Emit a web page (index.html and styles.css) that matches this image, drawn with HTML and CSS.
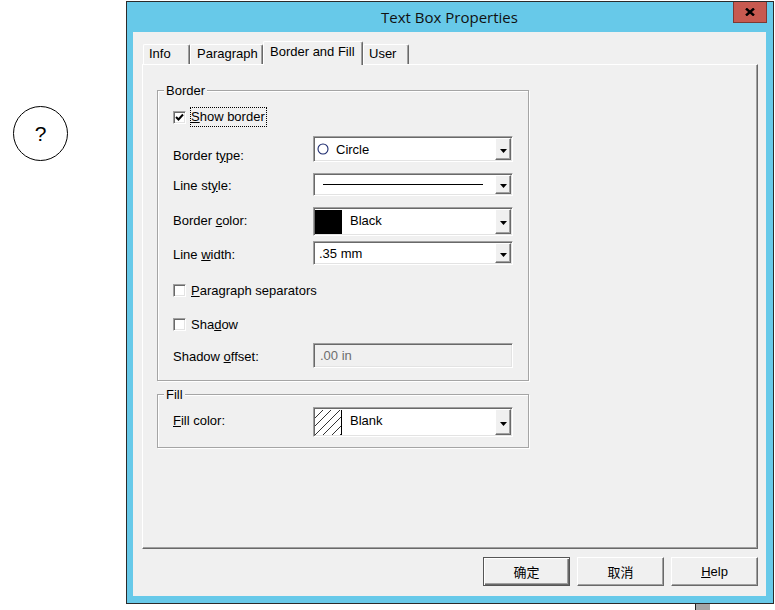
FILE: index.html
```html
<!DOCTYPE html>
<html lang="en">

<head>
	<meta charset="UTF-8">
	<meta name="viewport" content="width=device-width, initial-scale=1.0">
	<title>Text Box Properties</title>
	<link rel="stylesheet" href="styles.css">
</head>

<body>
	<div class="desktop">
		<!-- forme sur la page, derrière la boîte de dialogue -->
		<div class="shape-circle">?</div>
		<div class="behind-bar"></div>

		<div class="dialog">
			<div class="titlebar">
				<span class="title">Text Box Properties</span>
				<div class="close-btn">
					<svg width="10" height="8" viewBox="0 0 10 8"><path d="M1 0.5 L9 7.5 M9 0.5 L1 7.5" stroke="#000" stroke-width="2.4" /></svg>
				</div>
			</div>

			<div class="client">
				<div class="tabs">
					<div class="tab tab-info">Info</div>
					<div class="tab tab-para">Paragraph</div>
					<div class="tab tab-fill active">Border and Fill</div>
					<div class="tab tab-user">User</div>
				</div>

				<div class="pane">
					<div class="group group-border">
						<span class="group-title">Border</span>

						<div class="row row-show">
							<span class="checkbox">
								<svg width="9" height="9" viewBox="0 0 9 9"><path d="M1 4 L3.5 6.5 L8 1.5" fill="none" stroke="#000" stroke-width="2" /></svg>
							</span>
							<span class="check-label focus"><u>S</u>how border</span>
						</div>

						<div class="row row-type">
							<span class="label label-low">Border t<u>y</u>pe:</span>
							<div class="combo">
								<div class="combo-value">
									<svg class="circle-icon" width="12" height="12" viewBox="0 0 12 12"><circle cx="6" cy="6" r="5" fill="none" stroke="#1c2a6e" stroke-width="1.1" /></svg>
									<span>Circle</span>
								</div>
								<div class="combo-btn"><svg width="7" height="4" viewBox="0 0 7 4"><path d="M0 0 H7 L3.5 4 Z" /></svg></div>
							</div>
						</div>

						<div class="row row-style">
							<span class="label">Line st<u>y</u>le:</span>
							<div class="combo">
								<div class="combo-value">
									<div class="line-sample"></div>
								</div>
								<div class="combo-btn"><svg width="7" height="4" viewBox="0 0 7 4"><path d="M0 0 H7 L3.5 4 Z" /></svg></div>
							</div>
						</div>

						<div class="row row-color">
							<span class="label label-mid">Border <u>c</u>olor:</span>
							<div class="combo">
								<div class="combo-value swatch-value">
									<div class="swatch swatch-black"></div>
									<span class="swatch-text">Black</span>
								</div>
								<div class="combo-btn"><svg width="7" height="4" viewBox="0 0 7 4"><path d="M0 0 H7 L3.5 4 Z" /></svg></div>
							</div>
						</div>

						<div class="row row-width">
							<span class="label">Line <u>w</u>idth:</span>
							<div class="combo">
								<div class="combo-value text-value">.35 mm</div>
								<div class="combo-btn"><svg width="7" height="4" viewBox="0 0 7 4"><path d="M0 0 H7 L3.5 4 Z" /></svg></div>
							</div>
						</div>

						<div class="row row-sep">
							<span class="checkbox"></span>
							<span class="check-label"><u>P</u>aragraph separators</span>
						</div>

						<div class="row row-shadow">
							<span class="checkbox"></span>
							<span class="check-label">Sha<u>d</u>ow</span>
						</div>

						<div class="row row-offset">
							<span class="label">Shadow <u>o</u>ffset:</span>
							<div class="field-disabled">.00 in</div>
						</div>
					</div>

					<div class="group group-fill">
						<span class="group-title">Fill</span>

						<div class="row row-fill">
							<span class="label label-mid"><u>F</u>ill color:</span>
							<div class="combo">
								<div class="combo-value swatch-value">
									<div class="swatch swatch-hatch"></div>
									<span class="swatch-text">Blank</span>
								</div>
								<div class="combo-btn"><svg width="7" height="4" viewBox="0 0 7 4"><path d="M0 0 H7 L3.5 4 Z" /></svg></div>
							</div>
						</div>
					</div>
				</div>

				<div class="buttons">
					<div class="btn default">确定</div>
					<div class="btn">取消</div>
					<div class="btn"><u>H</u>elp</div>
				</div>
			</div>
		</div>
	</div>
</body>

</html>
```

FILE: styles.css
```css
* {
	box-sizing: border-box;
}

body {
	margin: 0;
	background: #fff;
	font-family: "Liberation Sans", "Noto Sans CJK SC", sans-serif;
	font-size: 13px;
	color: #000;
}

.desktop {
	position: relative;
	width: 775px;
	height: 610px;
	overflow: hidden;
}

.shape-circle {
	position: absolute;
	left: 13px;
	top: 106px;
	width: 55px;
	height: 55px;
	border: 1px solid #000;
	border-radius: 50%;
	display: flex;
	align-items: center;
	justify-content: center;
	font-size: 21px;
}

.behind-bar {
	position: absolute;
	left: 695px;
	top: 604px;
	width: 15px;
	height: 6px;
	background: #a6a6a6;
	border-left: 1px solid #222;
}

/* fenêtre */
.dialog {
	position: absolute;
	left: 126px;
	top: 1px;
	width: 648px;
	height: 603px;
	border: 1px solid #2b2b2b;
	background: #67c9e9;
	padding: 0 7px 7px 6px;
	display: flex;
	flex-direction: column;
}

.titlebar {
	position: relative;
	height: 30px;
	line-height: 30px;
	text-align: center;
	font-family: "Open Sans", "Liberation Sans", sans-serif;
	font-size: 15px;
	color: #111;
}

.close-btn {
	position: absolute;
	left: 600px;
	top: 0;
	width: 34px;
	height: 21px;
	background: #c75a50;
	border: 1px solid #7e3a33;
	border-top: none;
	display: flex;
	align-items: center;
	justify-content: center;
}

.client {
	flex: 1;
	background: #f0f0f0;
	padding: 9px 8px 10px 9px;
	display: flex;
	flex-direction: column;
}

/* onglets */
.tabs {
	height: 23px;
	display: flex;
	align-items: flex-end;
	padding-left: 1px;
}

.tab {
	height: 20px;
	line-height: 18px;
	padding-left: 5px;
	border: 1px solid;
	border-color: #fff #696969 transparent #fff;
	border-bottom: none;
	border-radius: 2px 2px 0 0;
	box-shadow: inset -1px 0 #a0a0a0;
	white-space: nowrap;
}

.tab.active {
	position: relative;
	z-index: 1;
	height: 24px;
	line-height: 20px;
	margin-bottom: -1px;
	padding-left: 6px;
	background: #f0f0f0;
}

.tab-info {
	width: 47px;
}

.tab-para {
	width: 73px;
	padding-left: 6px;
}

.tab-fill {
	width: 100px;
}

.tab-user {
	width: 46px;
}

.pane {
	flex: 1;
	border: 1px solid;
	border-color: #fff #696969 #696969 #fff;
	box-shadow: inset -1px -1px #a0a0a0;
}

/* cadres Border / Fill */
.group {
	width: 372px;
	margin-left: 14px;
	border: 1px solid #a5a5a5;
	box-shadow: 1px 1px 0 #fff, inset 1px 1px 0 #fff;
}

.group-border {
	margin-top: 25px;
	padding-bottom: 12px;
}

.group-fill {
	margin-top: 13px;
	padding-bottom: 10px;
}

.group-title {
	display: block;
	width: fit-content;
	height: 15px;
	line-height: 15px;
	margin: -8px 0 0 6px;
	padding: 0 2px;
	background: #f0f0f0;
}

.row {
	display: flex;
	align-items: center;
	padding-left: 15px;
}

.row-show {
	margin-top: 9px;
	height: 20px;
}

.row-type {
	margin-top: 9px;
	height: 26px;
}

.row-style {
	margin-top: 11px;
	height: 23px;
}

.row-color {
	margin-top: 11px;
	height: 29px;
}

.row-width {
	margin-top: 5px;
	height: 24px;
}

.row-sep {
	margin-top: 15px;
	height: 20px;
}

.row-shadow {
	margin-top: 14px;
	height: 20px;
}

.row-offset {
	margin-top: 9px;
	height: 25px;
}

.row-fill {
	margin-top: 5px;
	height: 30px;
}

.label {
	width: 140px;
	padding-top: 2px;
}

.label-low {
	align-self: flex-end;
	padding-top: 0;
	margin-bottom: -1px;
}

.label-mid {
	padding-top: 0;
	margin-top: -3px;
}

/* cases à cocher */
.checkbox {
	width: 13px;
	height: 13px;
	background: #fff;
	border: 1px solid;
	border-color: #a0a0a0 #fff #fff #a0a0a0;
	box-shadow: inset 1px 1px #696969, inset -1px -1px #e3e3e3;
	display: flex;
	align-items: center;
	justify-content: center;
}

.check-label {
	margin-left: 5px;
}

.check-label.focus {
	margin-left: 4px;
	height: 20px;
	line-height: 18px;
	border: 1px dotted #000;
	padding-right: 1px;
}

/* listes déroulantes */
.combo {
	width: 200px;
	height: 100%;
	display: flex;
	background: #fff;
	border: 1px solid;
	border-color: #a0a0a0 #fff #fff #a0a0a0;
	box-shadow: inset 1px 1px #696969, inset -1px -1px #e3e3e3;
	padding: 1px;
}

.combo-value {
	flex: 1;
	display: flex;
	align-items: center;
	padding-left: 2px;
}

.circle-icon {
	margin-right: 7px;
}

.line-sample {
	margin-left: 6px;
	width: 160px;
	height: 1px;
	background: #000;
}

.text-value {
	padding-left: 4px;
}

.swatch-value {
	padding-left: 0;
	align-items: stretch;
}

.swatch {
	width: 27px;
	margin-top: 1px;
}

.swatch-black {
	background: #000;
}

.swatch-hatch {
	border-right: 1px solid #000;
	background: repeating-linear-gradient(135deg, #fff 0 5px, #333 5px 6px);
}

.swatch-text {
	margin-left: 8px;
	align-self: center;
	margin-top: -3px;
}

.combo-btn {
	width: 16px;
	background: #f0f0f0;
	border: 1px solid;
	border-color: #fff #696969 #696969 #fff;
	box-shadow: inset -1px -1px #a0a0a0;
	display: flex;
	align-items: center;
	justify-content: center;
	padding-top: 3px;
}

.field-disabled {
	width: 200px;
	height: 100%;
	background: #f0f0f0;
	color: #6d6d6d;
	border: 1px solid;
	border-color: #a0a0a0 #fff #fff #a0a0a0;
	box-shadow: inset 1px 1px #696969, inset -1px -1px #e3e3e3;
	padding-left: 6px;
	display: flex;
	align-items: center;
}

/* boutons du bas */
.buttons {
	margin-top: 8px;
	display: flex;
	justify-content: flex-end;
	gap: 7px;
}

.btn {
	width: 87px;
	height: 29px;
	display: flex;
	align-items: center;
	justify-content: center;
	background: #f0f0f0;
	border: 1px solid;
	border-color: #fff #696969 #696969 #fff;
	box-shadow: inset -1px -1px #a0a0a0;
}

.btn.default {
	border-color: #555;
	box-shadow: inset 1px 1px #fff, inset -1px -1px #696969, inset -2px -2px #a0a0a0;
}
```
